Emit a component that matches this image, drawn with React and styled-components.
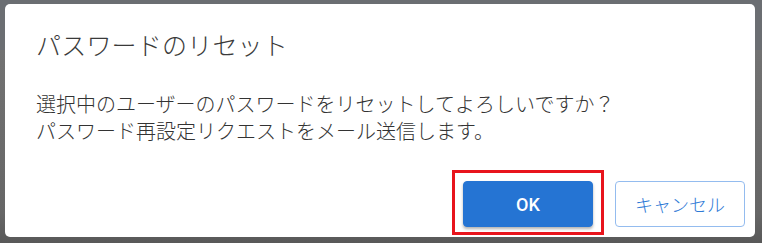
import React from 'react';
import styled, { createGlobalStyle } from 'styled-components';

const GlobalStyle = createGlobalStyle`
    html, body {
        margin: 0;
        padding: 0;
    }
    body {
        width: 762px;
        height: 243px;
        overflow: hidden;
        font-family: "Noto Sans CJK JP", "Noto Sans", sans-serif;
        background: #707070;
    }
`

const Page = styled.div`
    position: relative;
    width: 762px;
    height: 243px;
    display: flex;
    flex-direction: column;
    background: #6f6f6f;
`

const HeaderBand = styled.div`
    height: 50px;
    background: #6b6e72;
`

const Backdrop = styled.div`
    flex: 1;
    background: linear-gradient(#727272, #666 85%, #585858);
`

const Dialog = styled.div`
    position: absolute;
    left: 5px;
    top: 4px;
    width: 750px;
    height: 233px;
    box-sizing: border-box;
    background: #fff;
    border-radius: 5px;
    display: flex;
    flex-direction: column;
    padding: 23px 10px 10px 31px;
`

const Title = styled.h2`
    margin: 0;
    font-size: 25px;
    font-weight: 300;
    line-height: 34px;
    color: #3a3a3a;
    letter-spacing: 0.2px;
`

const Message = styled.p`
    margin: 29px 0 0;
    font-size: 20px;
    font-weight: 300;
    line-height: 27px;
    color: #333;
`

const Footer = styled.div`
    margin-top: auto;
    display: flex;
    justify-content: flex-end;
    gap: 22px;
`

const Highlight = styled.div`
    position: relative;
    &::after{
        content: '';
        position: absolute;
        left: -11px;
        right: -11px;
        top: -11px;
        bottom: -8px;
        border: 3px solid #e8141c;
        pointer-events: none;
    }
`

const Button = styled.button`
    width: 130px;
    height: 46px;
    border-radius: 4px;
    font-family: Roboto, "Noto Sans CJK JP", sans-serif;
    font-size: 18px;
    cursor: pointer;
    outline: none;
    background: ${p => p.primary ? '#2574d3' : '#fff'};
    color: ${p => p.primary ? '#fff' : '#2f7ad6'};
    border: 1px solid ${p => p.primary ? '#2574d3' : '#94bcef'};
    font-weight: ${p => p.primary ? 500 : 300};
    box-shadow: ${p => p.primary ? '0 2px 3px rgba(0,0,0,0.3)' : 'none'};
`

export default function App() {
    return (
        <Page>
            <GlobalStyle />
            <HeaderBand />
            <Backdrop />
            <Dialog>
                <Title>パスワードのリセット</Title>
                <Message>
                    選択中のユーザーのパスワードをリセットしてよろしいですか？<br />
                    パスワード再設定リクエストをメール送信します。
                </Message>
                <Footer>
                    <Highlight>
                        <Button primary>OK</Button>
                    </Highlight>
                    <Button>キャンセル</Button>
                </Footer>
            </Dialog>
        </Page>
    );
}
